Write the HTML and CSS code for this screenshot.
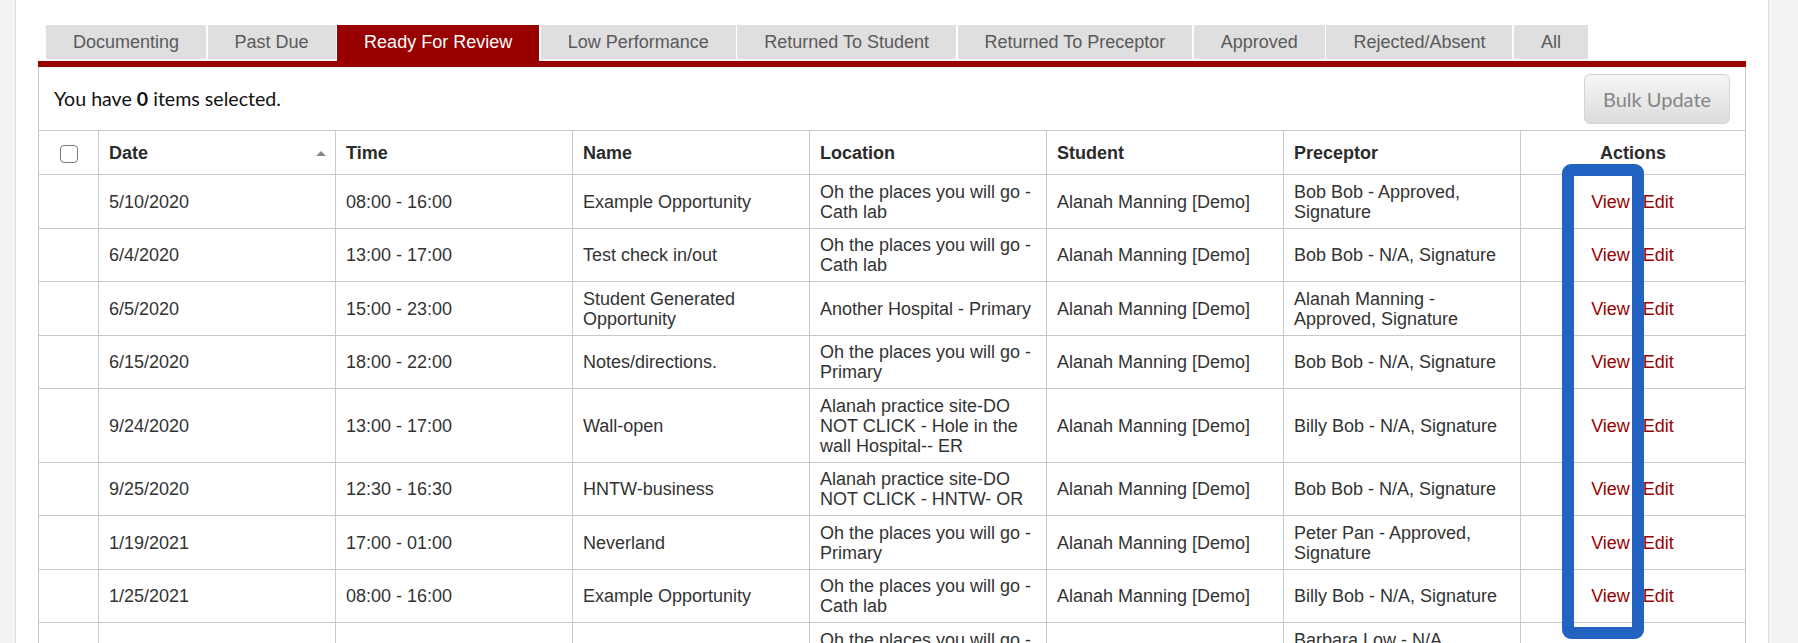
FILE: index.html
```html
<!DOCTYPE html>
<html lang="en">
<head>
    <meta charset="UTF-8">
    <meta name="viewport" content="width=device-width, initial-scale=1.0">
    <title>Shifts - Ready For Review</title>
    <link rel="stylesheet" href="styles.css">
</head>
<body>
    <div class="side side-left"></div>
    <main class="main">
        <ul class="tabs">
            <li class="tab">Documenting</li>
            <li class="tab">Past Due</li>
            <li class="tab active">Ready For Review</li>
            <li class="tab">Low Performance</li>
            <li class="tab">Returned To Student</li>
            <li class="tab">Returned To Preceptor</li>
            <li class="tab">Approved</li>
            <li class="tab">Rejected/Absent</li>
            <li class="tab">All</li>
        </ul>
        <div class="panel">
            <div class="toolbar">
                <span class="selected-count">You have <b>0</b> items selected.</span>
                <button class="bulk-btn" disabled>Bulk Update</button>
            </div>
            <table class="shifts">
                <colgroup>
                    <col class="col-check">
                    <col class="col-std">
                    <col class="col-std">
                    <col class="col-std">
                    <col class="col-std">
                    <col class="col-std">
                    <col class="col-std">
                    <col>
                </colgroup>
                <thead>
                    <tr>
                        <th class="check-cell"><input type="checkbox" class="check"></th>
                        <th><div class="sortable"><span>Date</span><span class="sort-up"></span></div></th>
                        <th>Time</th>
                        <th>Name</th>
                        <th>Location</th>
                        <th>Student</th>
                        <th>Preceptor</th>
                        <th class="actions">Actions</th>
                    </tr>
                </thead>
                <tbody>
                    <tr>
                        <td></td><td>5/10/2020</td><td>08:00 - 16:00</td><td>Example Opportunity</td>
                        <td>Oh the places you will go - Cath lab</td><td>Alanah Manning [Demo]</td>
                        <td>Bob Bob - Approved, Signature</td>
                        <td class="actions"><a href="#">View</a><a href="#">Edit</a></td>
                    </tr>
                    <tr>
                        <td></td><td>6/4/2020</td><td>13:00 - 17:00</td><td>Test check in/out</td>
                        <td>Oh the places you will go - Cath lab</td><td>Alanah Manning [Demo]</td>
                        <td>Bob Bob - N/A, Signature</td>
                        <td class="actions"><a href="#">View</a><a href="#">Edit</a></td>
                    </tr>
                    <tr>
                        <td></td><td>6/5/2020</td><td>15:00 - 23:00</td><td>Student Generated Opportunity</td>
                        <td>Another Hospital - Primary</td><td>Alanah Manning [Demo]</td>
                        <td>Alanah Manning - Approved, Signature</td>
                        <td class="actions"><a href="#">View</a><a href="#">Edit</a></td>
                    </tr>
                    <tr>
                        <td></td><td>6/15/2020</td><td>18:00 - 22:00</td><td>Notes/directions.</td>
                        <td>Oh the places you will go - Primary</td><td>Alanah Manning [Demo]</td>
                        <td>Bob Bob - N/A, Signature</td>
                        <td class="actions"><a href="#">View</a><a href="#">Edit</a></td>
                    </tr>
                    <tr>
                        <td></td><td>9/24/2020</td><td>13:00 - 17:00</td><td>Wall-open</td>
                        <td>Alanah practice site-DO NOT CLICK - Hole in the wall Hospital-- ER</td><td>Alanah Manning [Demo]</td>
                        <td>Billy Bob - N/A, Signature</td>
                        <td class="actions"><a href="#">View</a><a href="#">Edit</a></td>
                    </tr>
                    <tr>
                        <td></td><td>9/25/2020</td><td>12:30 - 16:30</td><td>HNTW-business</td>
                        <td>Alanah practice site-DO NOT CLICK - HNTW- OR</td><td>Alanah Manning [Demo]</td>
                        <td>Bob Bob - N/A, Signature</td>
                        <td class="actions"><a href="#">View</a><a href="#">Edit</a></td>
                    </tr>
                    <tr>
                        <td></td><td>1/19/2021</td><td>17:00 - 01:00</td><td>Neverland</td>
                        <td>Oh the places you will go - Primary</td><td>Alanah Manning [Demo]</td>
                        <td>Peter Pan - Approved, Signature</td>
                        <td class="actions"><a href="#">View</a><a href="#">Edit</a></td>
                    </tr>
                    <tr>
                        <td></td><td>1/25/2021</td><td>08:00 - 16:00</td><td>Example Opportunity</td>
                        <td>Oh the places you will go - Cath lab</td><td>Alanah Manning [Demo]</td>
                        <td>Billy Bob - N/A, Signature</td>
                        <td class="actions"><a href="#">View</a><a href="#">Edit</a></td>
                    </tr>
                    <tr>
                        <td></td><td>2/8/2021</td><td>08:00 - 16:00</td><td>Example Opportunity</td>
                        <td>Oh the places you will go - Primary</td><td>Alanah Manning [Demo]</td>
                        <td>Barbara Low - N/A, Signature</td>
                        <td class="actions"><a href="#">View</a><a href="#">Edit</a></td>
                    </tr>
                </tbody>
            </table>
            <!-- annotation box drawn over the View column -->
            <div class="highlight"></div>
        </div>
    </main>
    <div class="side side-right"></div>
</body>
</html>
```

FILE: styles.css
```css
body {
    margin: 0;
    display: flex;
    min-height: 100vh;
    background: #fff;
    color: #333;
    font-family: "Liberation Sans", Arial, Helvetica, sans-serif;
    font-size: 18px;
    line-height: 20px;
}
.side {
    background-color: #f3f3f3;
    flex: none;
}
.side-left {
    width: 15px;
    border-right: 1px solid #dcdcdc;
}
.side-right {
    width: 29px;
    border-left: 1px solid #dcdcdc;
}
.main {
    flex: 1;
    min-width: 0;
    padding: 25px 22px 0;
}

/* status tabs */
.tabs {
    list-style: none;
    margin: 0 0 0 8px;
    padding: 0;
    display: flex;
    align-items: flex-start;
    gap: 1.5px;
    height: 36px;
}
.tab {
    background-color: #dfdfdf;
    color: #5a5a5a;
    height: 34px;
    line-height: 35px;
    padding: 0 27px;
    white-space: nowrap;
}
.tab.active {
    background-color: #990000;
    color: #fff;
    height: 36px;
}

.panel {
    position: relative;
    border-top: 6px solid #990000;
}
.toolbar {
    display: flex;
    align-items: center;
    justify-content: space-between;
    padding: 7px 15px 6px 15px;
    border-left: 1px solid #c8c8c8;
    border-right: 1px solid #c8c8c8;
}
.selected-count {
    font-family: Lato, "Open Sans", sans-serif;
    font-size: 19.6px;
    color: #111;
}
.bulk-btn {
    width: 146px;
    height: 50px;
    font-family: Lato, "Open Sans", sans-serif;
    font-size: 20px;
    color: #858585;
    background: linear-gradient(#f6f6f6, #dcdcdc);
    border: 1px solid #d4d4d4;
    border-radius: 6px;
}

/* shifts table */
.shifts {
    width: 100%;
    border-collapse: collapse;
    table-layout: fixed;
}
.col-check {
    width: 60px;
}
.col-std {
    width: 237px;
}
.shifts th,
.shifts td {
    border: 1px solid #c8c8c8;
    text-align: left;
    vertical-align: middle;
}
.shifts th {
    padding: 12px 10px 11px;
    font-weight: bold;
    color: #2b2b2b;
}
.shifts td {
    padding: 6.5px 10px 6px;
}
.shifts .actions {
    text-align: center;
}
.check-cell {
    text-align: center !important;
}
.check {
    appearance: none;
    width: 18px;
    height: 18px;
    margin: 0;
    border: 1.5px solid #7a7a7a;
    border-radius: 4px;
    background: #fff;
    vertical-align: middle;
}
.sortable {
    display: flex;
    align-items: center;
    justify-content: space-between;
}
.sort-up {
    width: 0;
    height: 0;
    margin-right: -1px;
    border-left: 5px solid transparent;
    border-right: 5px solid transparent;
    border-bottom: 5px solid #888;
}
.actions a {
    color: #990000;
    text-decoration: none;
    margin: 0 7px 0 6px;
}

.highlight {
    position: absolute;
    left: 1524px;
    top: 97px;
    width: 82px;
    height: 475px;
    box-sizing: border-box;
    border: 12px solid #2262c0;
    border-radius: 9px;
}
```
